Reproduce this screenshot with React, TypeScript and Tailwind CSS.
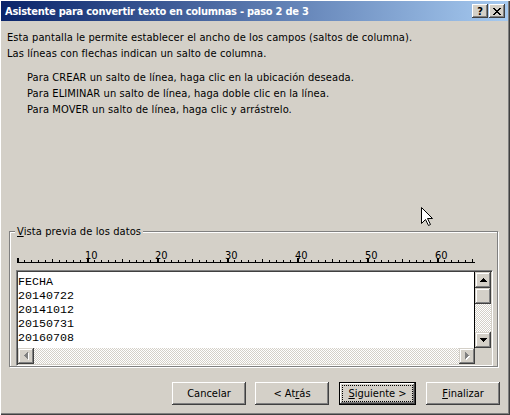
import React from "react";

const F = "font-['DejaVu_Sans_Condensed','Liberation_Sans',sans-serif]";

function UpArrow({ color = "#000" }: { color?: string }) {
  return (
    <svg width="7" height="4" shapeRendering="crispEdges">
      <rect x="3" y="0" width="1" height="1" fill={color} />
      <rect x="2" y="1" width="3" height="1" fill={color} />
      <rect x="1" y="2" width="5" height="1" fill={color} />
      <rect x="0" y="3" width="7" height="1" fill={color} />
    </svg>
  );
}
function DownArrow({ color = "#000" }: { color?: string }) {
  return (
    <svg width="7" height="4" shapeRendering="crispEdges">
      <rect x="0" y="0" width="7" height="1" fill={color} />
      <rect x="1" y="1" width="5" height="1" fill={color} />
      <rect x="2" y="2" width="3" height="1" fill={color} />
      <rect x="3" y="3" width="1" height="1" fill={color} />
    </svg>
  );
}
function LeftArrowDisabled() {
  const tri = (dx: number, dy: number, c: string) => (
    <g fill={c}>
      <rect x={3 + dx} y={0 + dy} width="1" height="7" />
      <rect x={2 + dx} y={1 + dy} width="1" height="5" />
      <rect x={1 + dx} y={2 + dy} width="1" height="3" />
      <rect x={0 + dx} y={3 + dy} width="1" height="1" />
    </g>
  );
  return (
    <svg width="5" height="8" shapeRendering="crispEdges">
      {tri(1, 1, "#fff")}
      {tri(0, 0, "#808080")}
    </svg>
  );
}
function RightArrowDisabled() {
  const tri = (dx: number, dy: number, c: string) => (
    <g fill={c}>
      <rect x={0 + dx} y={0 + dy} width="1" height="7" />
      <rect x={1 + dx} y={1 + dy} width="1" height="5" />
      <rect x={2 + dx} y={2 + dy} width="1" height="3" />
      <rect x={3 + dx} y={3 + dy} width="1" height="1" />
    </g>
  );
  return (
    <svg width="5" height="8" shapeRendering="crispEdges">
      {tri(1, 1, "#fff")}
      {tri(0, 0, "#808080")}
    </svg>
  );
}

function ScrollBtn({ children }: { children?: React.ReactNode }) {
  return (
    <div className="w-[16px] h-[16px] shrink-0 bg-[#d4d0c8] flex items-center justify-center shadow-[inset_-1px_-1px_0_#404040,inset_1px_1px_0_#d4d0c8,inset_-2px_-2px_0_#808080,inset_2px_2px_0_#fff]">
      {children}
    </div>
  );
}

function Ruler() {
  const ticks: React.ReactNode[] = [];
  for (let i = 0; i <= 65; i++) {
    const x = 1 + 7 * i;
    if (i % 10 === 0) ticks.push(<rect key={i} x={x} y={20} width={2} height={5} fill="#000" />);
    else if (i % 5 === 0) ticks.push(<rect key={i} x={x} y={21} width={1} height={3} fill="#000" />);
    else ticks.push(<rect key={i} x={x} y={22} width={1} height={2} fill="#000" />);
  }
  const labels = [10, 20, 30, 40, 50, 60].map((n, k) => (
    <text
      key={n}
      x={70 * (k + 1) - 1}
      y={21}
      fontSize="11"
      fontFamily="'DejaVu Sans Condensed','Liberation Sans',sans-serif"
      fill="#000"
    >
      {n}
    </text>
  ));
  return (
    <svg width="460" height="32" className="mt-[6px] block" shapeRendering="crispEdges">
      <rect x={1} y={24} width={458} height={1} fill="#000" />
      {ticks}
      {labels}
    </svg>
  );
}

function Button({ children, def }: { children: React.ReactNode; def?: boolean }) {
  if (def) {
    return (
      <div className="w-[77px] h-[23px] border border-black bg-[#d4d0c8] p-[2px] shadow-[inset_-1px_-1px_0_#404040,inset_1px_1px_0_#fff,inset_-2px_-2px_0_#808080] flex">
        <div className="flex-1 border border-dotted border-black flex items-center justify-center text-[11px] leading-[13px] text-black">
          {children}
        </div>
      </div>
    );
  }
  return (
    <div className="w-[74px] h-[23px] bg-[#d4d0c8] shadow-[inset_-1px_-1px_0_#404040,inset_1px_1px_0_#fff,inset_-2px_-2px_0_#808080] flex items-center justify-center text-[11px] leading-[13px] text-black">
      {children}
    </div>
  );
}

export default function App() {
  return (
    <div
      className={`relative w-[510px] h-[415px] bg-[#d4d0c8] flex flex-col overflow-hidden ${F} shadow-[inset_1px_1px_0_#fff,inset_-1px_-1px_0_#404040,inset_-2px_-2px_0_#808080] text-black`}
    >
      {/* Title bar */}
      <div className="mt-[1px] ml-[1px] w-[507px] h-[20px] shrink-0 flex items-center pl-[4px] pr-[3px] bg-[linear-gradient(to_right,#0a246a,#a6caf0)]">
        <div className="flex-1 text-white font-bold text-[11px] leading-[13px] tracking-[-0.25px] whitespace-nowrap">
          Asistente para convertir texto en columnas - paso 2 de 3
        </div>
        <div className="flex gap-[1px]">
          <div className="w-[16px] h-[14px] bg-[#d4d0c8] flex items-center justify-center shadow-[inset_-1px_-1px_0_#404040,inset_1px_1px_0_#fff,inset_-2px_-2px_0_#808080] text-[11px] leading-[11px] font-bold text-black">
            ?
          </div>
          <div className="w-[16px] h-[14px] bg-[#d4d0c8] flex items-center justify-center shadow-[inset_-1px_-1px_0_#404040,inset_1px_1px_0_#fff,inset_-2px_-2px_0_#808080]">
            <svg width="8" height="7" shapeRendering="crispEdges">
              {[0, 1, 2, 3, 4, 5, 6].map((i) => (
                <g key={i}>
                  <rect x={i} y={i} width="2" height="1" fill="#000" />
                  <rect x={6 - i} y={i} width="2" height="1" fill="#000" />
                </g>
              ))}
            </svg>
          </div>
        </div>
      </div>

      {/* Description */}
      <div className="pl-[7px] pt-[9px] text-[11px] leading-[16px] tracking-[0.1px]">
        <div>Esta pantalla le permite establecer el ancho de los campos (saltos de columna).</div>
        <div>Las líneas con flechas indican un salto de columna.</div>
        <div className="mt-[8px] pl-[20px]">
          <div>Para CREAR un salto de línea, haga clic en la ubicación deseada.</div>
          <div>Para ELIMINAR un salto de línea, haga doble clic en la línea.</div>
          <div>Para MOVER un salto de línea, haga clic y arrástrelo.</div>
        </div>
      </div>

      {/* Group box */}
      <div className="relative mt-[113px] ml-[9px] w-[489px] border border-[#808080] shadow-[inset_1px_1px_0_#fff,1px_1px_0_#fff] pl-[6px]">
        <div className="absolute top-[-7px] left-[5px] px-[2px] bg-[#d4d0c8] text-[11px] leading-[13px] tracking-[0.1px]">
          <span className="underline">V</span>ista previa de los datos
        </div>
        <Ruler />
        <div className="w-[477px] h-[96px] border border-t-[#808080] border-l-[#808080] border-r-white border-b-white shadow-[inset_1px_1px_0_#404040,inset_-1px_-1px_0_#d4d0c8] p-[1px]">
          <div className="grid grid-cols-[457px_16px] grid-rows-[76px_16px] w-full h-full">
            <div className="bg-white border-r border-black pt-[3px] font-['Liberation_Mono',monospace] text-[11.67px] leading-[14px] whitespace-pre">
              <div>FECHA</div>
              <div>20140722</div>
              <div>20141012</div>
              <div>20150731</div>
              <div>20160708</div>
            </div>
            <div className="flex flex-col">
              <ScrollBtn>
                <UpArrow />
              </ScrollBtn>
              <ScrollBtn />
              <div className="flex-1 bg-[image:repeating-conic-gradient(#fff_0%_25%,#d4d0c8_0%_50%)] bg-[length:2px_2px]" />
              <ScrollBtn>
                <DownArrow />
              </ScrollBtn>
            </div>
            <div className="flex">
              <ScrollBtn>
                <LeftArrowDisabled />
              </ScrollBtn>
              <div className="flex-1 bg-[image:repeating-conic-gradient(#fff_0%_25%,#d4d0c8_0%_50%)] bg-[length:2px_2px]" />
              <ScrollBtn>
                <RightArrowDisabled />
              </ScrollBtn>
            </div>
            <div className="bg-[#d4d0c8]" />
          </div>
        </div>
      </div>

      {/* Buttons */}
      <div className="mt-[15px] flex justify-end pr-[10px]">
        <Button>Cancelar</Button>
        <div className="ml-[9px]">
          <Button>
            &lt; At<span className="underline">r</span>ás
          </Button>
        </div>
        <div className="ml-[10px]">
          <Button def>
            <span className="underline">S</span>iguiente &gt;
          </Button>
        </div>
        <div className="ml-[10px]">
          <Button>
            <span className="underline">F</span>inalizar
          </Button>
        </div>
      </div>

      {/* Mouse cursor */}
      <svg className="absolute left-[421px] top-[207px]" width="12" height="20">
        <path
          d="M0.5 0.5 L0.5 16.5 L4.5 12.5 L7.5 18.5 L9.5 17.5 L6.5 11.5 L11.5 11.5 Z"
          fill="#fff"
          stroke="#000"
          strokeWidth="1"
        />
      </svg>
    </div>
  );
}
